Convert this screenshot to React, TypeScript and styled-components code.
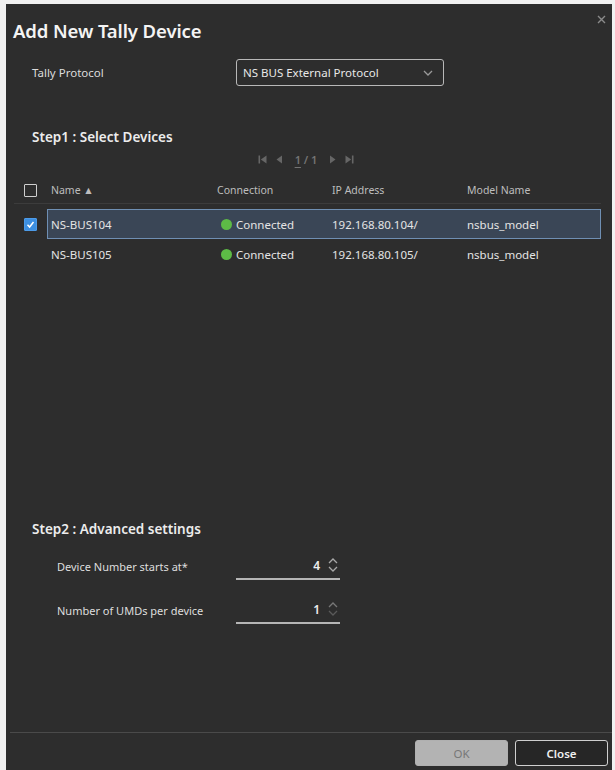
import React from "react";
import styled, { createGlobalStyle } from "styled-components";

const GlobalStyle = createGlobalStyle`
  html, body {
    margin: 0;
    padding: 0;
    background: #f1f1f1;
    font-family: "Noto Sans", "Open Sans", sans-serif;
  }
`;

type Device = {
  name: string;
  ip: string;
  model: string;
  selected: boolean;
};

const devices: Device[] = [
  { name: "NS-BUS104", ip: "192.168.80.104/", model: "nsbus_model", selected: true },
  { name: "NS-BUS105", ip: "192.168.80.105/", model: "nsbus_model", selected: false },
];

const Chevron = ({ dir = "down", color = "#9a9a9a" }: { dir?: "up" | "down"; color?: string }) => (
  <svg width="10" height="6" viewBox="0 0 10 6">
    <path
      d={dir === "down" ? "M1 1 L5 5 L9 1" : "M1 5 L5 1 L9 5"}
      stroke={color}
      strokeWidth="1.3"
      fill="none"
    />
  </svg>
);

const PageIcon = ({ kind }: { kind: "first" | "prev" | "next" | "last" }) => {
  const c = "#666";
  return (
    <svg width="9" height="9" viewBox="0 0 9 9">
      {kind === "first" && (
        <>
          <rect x="0.5" y="0.5" width="1.6" height="8" fill={c} />
          <path d="M8.5 0.5 L2.8 4.5 L8.5 8.5 Z" fill={c} />
        </>
      )}
      {kind === "prev" && <path d="M7 0.5 L1.5 4.5 L7 8.5 Z" fill={c} />}
      {kind === "next" && <path d="M2 0.5 L7.5 4.5 L2 8.5 Z" fill={c} />}
      {kind === "last" && (
        <>
          <path d="M0.5 0.5 L6.2 4.5 L0.5 8.5 Z" fill={c} />
          <rect x="6.9" y="0.5" width="1.6" height="8" fill={c} />
        </>
      )}
    </svg>
  );
};

const Spinner = ({ dim }: { dim?: boolean }) => (
  <SpinBox>
    <Chevron dir="up" color={dim ? "#777" : "#a8a8a8"} />
    <Chevron dir="down" color={dim ? "#5a5a5a" : "#a8a8a8"} />
  </SpinBox>
);

const App = () => {
  return (
    <>
      <GlobalStyle />
      <Dialog>
        <CloseX>
          <svg width="9" height="9" viewBox="0 0 9 9">
            <path d="M1 1 L8 8 M8 1 L1 8" stroke="#8a8a8a" strokeWidth="1.4" />
          </svg>
        </CloseX>
        <Title>Add New Tally Device</Title>

        <ProtocolRow>
          <Label>Tally Protocol</Label>
          <Select>
            <span>NS BUS External Protocol</span>
            <Chevron />
          </Select>
        </ProtocolRow>

        <StepTitle>Step1 : Select Devices</StepTitle>

        <Pager>
          <PageIcon kind="first" />
          <PageIcon kind="prev" />
          <PageText>
            <u>1</u> / 1
          </PageText>
          <PageIcon kind="next" />
          <PageIcon kind="last" />
        </Pager>

        <Table>
          <HeadRow>
            <CheckCell>
              <CheckBox checked={false} />
            </CheckCell>
            <Cells>
              <HeadCell>Name ▲</HeadCell>
              <HeadCell>Connection</HeadCell>
              <HeadCell>IP Address</HeadCell>
              <HeadCell>Model Name</HeadCell>
            </Cells>
          </HeadRow>
          <Rows>
            {devices.map((d) => (
              <Row key={d.name}>
                <CheckCell>
                  {d.selected && (
                    <CheckBox checked>
                      <svg width="9" height="9" viewBox="0 0 9 9">
                        <path d="M1.5 4.8 L3.6 7 L7.5 2" stroke="#fff" strokeWidth="1.5" fill="none" />
                      </svg>
                    </CheckBox>
                  )}
                </CheckCell>
                <Cells selected={d.selected}>
                  <Cell>{d.name}</Cell>
                  <Cell>
                    <Dot />
                    Connected
                  </Cell>
                  <Cell>{d.ip}</Cell>
                  <Cell>{d.model}</Cell>
                </Cells>
              </Row>
            ))}
          </Rows>
        </Table>

        <StepTitle>Step2 : Advanced settings</StepTitle>
        <Fields>
          <Field>
            <FieldLabel>Device Number starts at*</FieldLabel>
            <NumberInput>
              <span>4</span>
              <Spinner />
            </NumberInput>
          </Field>
          <Field>
            <FieldLabel>Number of UMDs per device</FieldLabel>
            <NumberInput>
              <span>1</span>
              <Spinner dim />
            </NumberInput>
          </Field>
        </Fields>

        <Spacer />

        <Footer>
          <Button primary disabled>
            OK
          </Button>
          <Button>Close</Button>
        </Footer>
      </Dialog>
    </>
  );
};

export default App;

const Dialog = styled.div`
  position: relative;
  box-sizing: border-box;
  margin: 4px 3px 0 6px;
  height: 766px;
  background: #2d2d2d;
  display: flex;
  flex-direction: column;
  color: #e6e6e6;
`;

const CloseX = styled.div`
  position: absolute;
  top: 11px;
  right: 6px;
  width: 9px;
  height: 9px;
  display: flex;
`;

const Title = styled.div`
  padding: 15px 0 0 7px;
  font-size: 18.5px;
  line-height: 24px;
  font-weight: 600;
  color: #f4f4f4;
  letter-spacing: -0.1px;
`;

const ProtocolRow = styled.div`
  display: flex;
  align-items: center;
  margin-top: 16px;
  padding-left: 26px;
`;

const Label = styled.div`
  width: 204px;
  font-size: 11.5px;
  color: #dcdcdc;
`;

const Select = styled.div`
  box-sizing: border-box;
  width: 208px;
  height: 27px;
  border: 1px solid #b8b8b8;
  border-radius: 3px;
  display: flex;
  align-items: center;
  justify-content: space-between;
  padding: 0 10px 0 6px;
  font-size: 11.5px;
  color: #e8e8e8;
`;

const StepTitle = styled.div`
  margin-top: 41px;
  padding-left: 26px;
  font-size: 13.5px;
  line-height: 20px;
  font-weight: 600;
  color: #ececec;
`;

const Pager = styled.div`
  margin-top: 4px;
  display: flex;
  align-items: center;
  justify-content: center;
  gap: 8px;
  height: 16px;
  padding-right: 6px;
`;

const PageText = styled.span`
  font-size: 11px;
  color: #747474;
  font-weight: 600;
  padding: 0 3px;

  u {
    text-underline-offset: 3px;
  }
`;

const Table = styled.div`
  margin-top: 10px;
  padding: 0 11px 0 18px;
  height: 301px;
  display: flex;
  flex-direction: column;
`;

const HeadRow = styled.div`
  display: flex;
  align-items: center;
  height: 26px;
  border-bottom: 1px solid #3c3c3c;
  margin-left: -10px;
  padding-left: 10px;
`;

const Rows = styled.div`
  margin-top: 5px;
  display: flex;
  flex-direction: column;
`;

const Row = styled.div`
  display: flex;
  align-items: stretch;
  height: 30px;
`;

const CheckCell = styled.div`
  width: 23px;
  flex-shrink: 0;
  display: flex;
  align-items: center;
`;

const CheckBox = styled.div<{ checked: boolean }>`
  box-sizing: border-box;
  width: 13px;
  height: 13px;
  display: flex;
  align-items: center;
  justify-content: center;
  border: ${(p) => (p.checked ? "1px solid #4d9be8" : "1.5px solid #cfcfcf")};
  background: ${(p) => (p.checked ? "#3d8fe0" : "transparent")};
  border-radius: 1px;
`;

const Cells = styled.div<{ selected?: boolean }>`
  flex: 1;
  box-sizing: border-box;
  display: grid;
  grid-template-columns: 166px 115px 135px 1fr;
  align-items: center;
  padding-left: 3px;
  border: 1px solid ${(p) => (p.selected ? "#6f8fb3" : "transparent")};
  background: ${(p) => (p.selected ? "#3a4656" : "transparent")};
`;

const HeadCell = styled.div`
  font-size: 10.5px;
  color: #bdbdbd;
`;

const Cell = styled.div`
  display: flex;
  align-items: center;
  font-size: 11.5px;
  color: #e4e4e4;
  white-space: nowrap;
`;

const Dot = styled.span`
  width: 11px;
  height: 11px;
  border-radius: 50%;
  background: #5dbb46;
  margin: 0 4px 0 4px;
`;

const Fields = styled.div`
  margin-top: 13px;
  padding-left: 51px;
  display: flex;
  flex-direction: column;
  gap: 16px;
`;

const Field = styled.div`
  display: flex;
  align-items: center;
  height: 28px;
`;

const FieldLabel = styled.div`
  width: 179px;
  font-size: 11px;
  color: #dedede;
`;

const NumberInput = styled.div`
  box-sizing: border-box;
  width: 104px;
  height: 28px;
  display: flex;
  align-items: center;
  justify-content: flex-end;
  gap: 8px;
  padding-right: 2px;
  border-bottom: 2px solid #b5b5b5;
  font-size: 12px;
  font-weight: 600;
  color: #ededed;
`;

const SpinBox = styled.div`
  display: flex;
  flex-direction: column;
  gap: 2px;
`;

const Spacer = styled.div`
  flex: 1;
`;

const Footer = styled.div`
  margin-left: 4px;
  padding: 7px 4px 4px 0;
  border-top: 1px solid #4a4a4a;
  display: flex;
  justify-content: flex-end;
  gap: 7px;
`;

const Button = styled.button<{ primary?: boolean }>`
  box-sizing: border-box;
  width: 93px;
  height: 26px;
  border-radius: 3px;
  font-family: "Noto Sans", "Open Sans", sans-serif;
  font-size: 11.5px;
  border: 1px solid ${(p) => (p.primary ? "#b0b0b0" : "#cfcfcf")};
  background: ${(p) => (p.primary ? "#b3b3b3" : "#262626")};
  color: ${(p) => (p.primary ? "#777" : "#f0f0f0")};
  font-weight: ${(p) => (p.primary ? 400 : 600)};
`;
